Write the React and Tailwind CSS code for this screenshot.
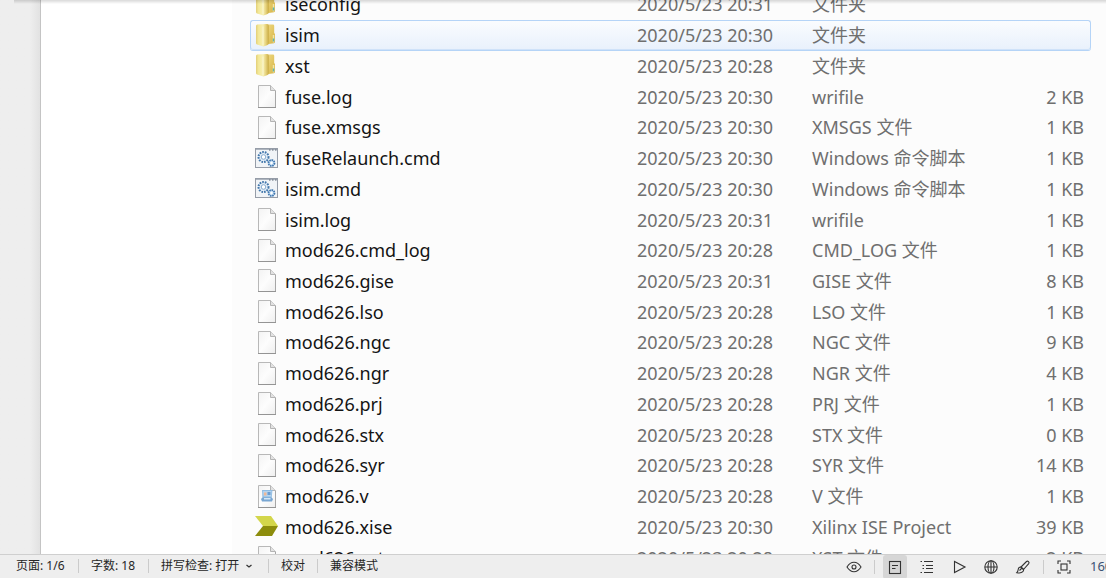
import React from "react";

const files = [
  { name: "iseconfig", date: "2020/5/23 20:31", type: "文件夹", icon: "folder" },
  { name: "isim", date: "2020/5/23 20:30", type: "文件夹", icon: "folder", selected: true },
  { name: "xst", date: "2020/5/23 20:28", type: "文件夹", icon: "folder" },
  { name: "fuse.log", date: "2020/5/23 20:30", type: "wrifile", size: "2 KB" },
  { name: "fuse.xmsgs", date: "2020/5/23 20:30", type: "XMSGS 文件", size: "1 KB" },
  { name: "fuseRelaunch.cmd", date: "2020/5/23 20:30", type: "Windows 命令脚本", size: "1 KB", icon: "cmd" },
  { name: "isim.cmd", date: "2020/5/23 20:30", type: "Windows 命令脚本", size: "1 KB", icon: "cmd" },
  { name: "isim.log", date: "2020/5/23 20:31", type: "wrifile", size: "1 KB" },
  { name: "mod626.cmd_log", date: "2020/5/23 20:28", type: "CMD_LOG 文件", size: "1 KB" },
  { name: "mod626.gise", date: "2020/5/23 20:31", type: "GISE 文件", size: "8 KB" },
  { name: "mod626.lso", date: "2020/5/23 20:28", type: "LSO 文件", size: "1 KB" },
  { name: "mod626.ngc", date: "2020/5/23 20:28", type: "NGC 文件", size: "9 KB" },
  { name: "mod626.ngr", date: "2020/5/23 20:28", type: "NGR 文件", size: "4 KB" },
  { name: "mod626.prj", date: "2020/5/23 20:28", type: "PRJ 文件", size: "1 KB" },
  { name: "mod626.stx", date: "2020/5/23 20:28", type: "STX 文件", size: "0 KB" },
  { name: "mod626.syr", date: "2020/5/23 20:28", type: "SYR 文件", size: "14 KB" },
  { name: "mod626.v", date: "2020/5/23 20:28", type: "V 文件", size: "1 KB", icon: "verilog" },
  { name: "mod626.xise", date: "2020/5/23 20:30", type: "Xilinx ISE Project", size: "39 KB", icon: "xise" },
  { name: "mod626.xst", date: "2020/5/23 20:28", type: "XST 文件", size: "2 KB" },
];

const Gradients = () => (
  <svg className="absolute size-0" aria-hidden="true">
    <defs>
      <linearGradient id="folder-front" x1="0" y1="0" x2="1" y2="0">
        <stop offset="0" stopColor="#e3cf78" />
        <stop offset="0.2" stopColor="#f3e898" />
        <stop offset="0.55" stopColor="#f7f0b4" />
        <stop offset="0.75" stopColor="#e8d582" />
        <stop offset="1" stopColor="#c9ab42" />
      </linearGradient>
      <linearGradient id="folder-back" x1="0" y1="0" x2="1" y2="1">
        <stop offset="0" stopColor="#f1dd88" />
        <stop offset="1" stopColor="#d6b345" />
      </linearGradient>
      <linearGradient id="page-fill" x1="0" y1="0" x2="1" y2="1">
        <stop offset="0" stopColor="#f3f3f3" />
        <stop offset="0.5" stopColor="#fdfdfd" />
        <stop offset="1" stopColor="#eeeeee" />
      </linearGradient>
    </defs>
  </svg>
);

const FolderIcon = () => (
  <>
    <path d="M10 1.500h8q1.200 0 1.200 1.200V10l.8 1v8q0 1-1 1.200L10 21.500z" fill="url(#folder-back)" />
    <path
      d="M1 3Q1 1.800 2.200 1.600L12 1q1.800 0 1.800 1.700V20q0 1.800-1.800 2.300L8.500 23.500 2 21.500Q1 21 1 20z"
      fill="url(#folder-front)"
    />
    <path d="M8 3.500v19" stroke="#fdf9d8" strokeWidth="1" opacity="0.8" />
    <path d="M18.500 12v7.500" stroke="#f2e5a6" strokeWidth="1.500" />
    <path d="M18.500 15.500v3" stroke="#5fb3ad" strokeWidth="1.500" />
  </>
);

const PageShape = () => (
  <>
    <path d="M3.500 1.500h12l5 5v17h-17z" fill="url(#page-fill)" stroke="#b8b8b8" />
    <path d="M3 23.500h18" stroke="#949494" />
    <path d="M20.500 7v16" stroke="#a6a6a6" />
    <path d="M15.500 1.500v5h5" fill="#e2e2e2" stroke="#b4b4b4" />
  </>
);

const CmdIcon = () => (
  <>
    <rect x="0.500" y="2.500" width="22" height="19" fill="#f1f4f7" stroke="#969da8" />
    <path d="M1 3.500h21" stroke="#aeb5bf" />
    <path d="M14 4h1.500M17 4h1.500M20 4h1.500" stroke="#5d6674" />
    <circle cx="8.500" cy="11" r="5" fill="#e4eef8" stroke="#4478ac" strokeWidth="2" strokeDasharray="1.700 1" />
    <circle cx="8.500" cy="11" r="2.300" fill="#fff" stroke="#85a9cc" />
    <circle cx="16.500" cy="17" r="3" fill="#c9e0f5" stroke="#4178b0" strokeWidth="1.800" strokeDasharray="1.600 .7" />
    <circle cx="16.500" cy="17" r="1.200" fill="#fff" />
  </>
);

const VerilogIcon = () => (
  <>
    <PageShape />
    <path d="M7 6h10.500l-1 9H7.500z" fill="#8fbce3" />
    <path d="M8 7h8.500l-.5 5.500H8.500z" fill="#b5d3ed" />
    <path d="M9 8.500h2.500v3H9z" fill="#f0b896" />
    <path d="M12.500 8h3v3h-3z" fill="#6b9dd0" />
    <path d="M6 15l1.500-1.500h9L18 15l-1 2.500H7z" fill="#78a6d2" />
    <path d="M9 14h6.500v1.500H9z" fill="#d6e7f5" />
  </>
);

const XiseIcon = () => (
  <>
    <path d="M0 2h16l7 10H8z" fill="#d3d64b" />
    <path d="M8 12h15l-6 10H0z" fill="#8c8c0c" />
  </>
);

const icons = {
  folder: FolderIcon,
  cmd: CmdIcon,
  verilog: VerilogIcon,
  xise: XiseIcon,
  page: PageShape,
};

const FileIcon = ({ kind = "page" }) => {
  const Shape = icons[kind];
  return (
    <svg viewBox="0 0 24 25" className="h-[25px] w-6 shrink-0" fill="none" aria-hidden="true">
      <Shape />
    </svg>
  );
};

const FileRow = ({ file }) => {
  const cell = file.selected
    ? "border-y border-t-[#b5d4f7] border-b-[#cfe2f9] border-x-[#b5d4f7] bg-linear-to-b from-[#fafcfe] to-[#e9f1fc] px-1.5 shadow-[0_1px_0_#b5d4f7]"
    : "border-y border-transparent px-1.5";
  return (
    <tr className="text-[#6f6f6f]">
      <td className={`${cell} rounded-l-[3px] border-l pl-1 text-[#141414]`}>
        <div className="flex items-center gap-1.5">
          <FileIcon kind={file.icon} />
          <span>{file.name}</span>
        </div>
      </td>
      <td className={cell}>{file.date}</td>
      <td className={cell}>{file.type}</td>
      <td className={`${cell} rounded-r-[3px] border-r text-right`}>{file.size}</td>
    </tr>
  );
};

const Divider = () => <span className="h-3.5 w-px bg-[#cbcbcb]" />;

const ToolIcon = ({ children }) => (
  <svg
    viewBox="0 0 16 16"
    className="size-4"
    fill="none"
    stroke="#333"
    strokeWidth="1.1"
    aria-hidden="true"
  >
    {children}
  </svg>
);

const ToolButton = ({ label, active, children }) => (
  <button
    type="button"
    aria-label={label}
    className={`flex h-6 w-6 items-center justify-center rounded-[3px] ${active ? "bg-[#d6d6d6]" : ""}`}
  >
    <ToolIcon>{children}</ToolIcon>
  </button>
);

const StatusBar = () => (
  <footer className="flex h-6 shrink-0 items-center justify-between overflow-hidden border-t border-[#cfcfcf] bg-[#eee] text-xs whitespace-nowrap text-[#262626]">
    <div className="flex items-center gap-3 pb-0.5 pl-4">
      <button type="button" className="min-w-[50px] text-left">
        页面: 1/6
      </button>
      <Divider />
      <button type="button" className="min-w-[45px] text-left">
        字数: 18
      </button>
      <Divider />
      <button type="button" className="flex min-w-[95px] items-center gap-1.5">
        拼写检查: 打开
        <svg viewBox="0 0 8 8" className="size-2" fill="none" stroke="#333" strokeWidth="1.3" aria-hidden="true">
          <path d="M1.500 3l2.500 2 2.500-2" />
        </svg>
      </button>
      <Divider />
      <button type="button">校对</button>
      <Divider />
      <button type="button">兼容模式</button>
    </div>

    <div className="flex items-center">
      <ToolButton label="护眼模式">
        <path d="M1 8q3-4.700 7-4.700T15 8q-3 4.700-7 4.700T1 8z" />
        <circle cx="8" cy="8" r="2" />
      </ToolButton>
      <span className="mx-2 flex">
        <Divider />
      </span>
      <div className="flex gap-2">
        <ToolButton label="页面视图" active>
          <rect x="2.500" y="2.500" width="11" height="12" />
          <path d="M5 6.500h6M5 9.500h3.500" />
        </ToolButton>
        <ToolButton label="大纲">
          <path d="M5 2.500h9M7 6.500h7M7 9.500h7M5 13.500h9" />
          <path d="M1.500 2.500h1.500M3.500 6.500h1.500M3.500 9.500h1.500M1.500 13.500h1.500" />
        </ToolButton>
        <ToolButton label="阅读版式">
          <path d="M3.500 2.500v11L14 8z" />
        </ToolButton>
        <ToolButton label="Web版式">
          <circle cx="8" cy="8" r="6.200" />
          <ellipse cx="8" cy="8" rx="3" ry="6.200" />
          <path d="M2 8h12M8 2v12" />
        </ToolButton>
        <ToolButton label="写作模式">
          <path d="M6 8l5.500-5.500q1-.8 2 .2t.2 2L8.500 10.500z" />
          <path d="M6 8q-2.500-.2-2.800 2.500Q3 12.500 1.800 13.700q4.400.8 6-1 1-1 .7-2.200zM4.500 11.500L7 9" />
        </ToolButton>
      </div>
      <span className="mx-2 flex">
        <Divider />
      </span>
      <ToolButton label="适合页面">
        <path d="M2 5V2h3M11 2h3v3M14 11v3h-3M5 14H2v-3" />
        <rect x="5" y="5" width="6" height="6" />
      </ToolButton>
      <button type="button" className="ml-3.5 w-4 overflow-hidden text-left text-[13px] text-[#3b5274]">
        160%
      </button>
    </div>
  </footer>
);

export default function App() {
  return (
    <div className="flex h-screen flex-col overflow-hidden bg-[#eee] font-['Noto_Sans','Noto_Sans_CJK_SC',sans-serif]">
      <Gradients />
      <main className="relative flex min-h-0 flex-1 overflow-hidden">
        <div className="w-10 shrink-0 bg-linear-to-r from-[#eee] from-75% to-[#e2e2e2]" />
        <div className="flex min-w-0 flex-1 border-l border-[#c4c4c4] bg-white pl-[191px]">
          <div className="min-w-0 flex-1 bg-[#fcfcfc] pr-[15px] pl-[18px]">
            <table className="-mt-[11px] h-[584px] w-full table-fixed border-separate border-spacing-0 text-lg leading-6 whitespace-nowrap">
              <colgroup>
                <col />
                <col className="w-[175px]" />
                <col className="w-[184px]" />
                <col className="w-[101px]" />
              </colgroup>
              <tbody>
                {files.map((file) => (
                  <FileRow key={file.name} file={file} />
                ))}
              </tbody>
            </table>
          </div>
        </div>
        <div className="pointer-events-none absolute top-0 right-0 left-3.5 h-1 bg-linear-to-b from-black/15 to-transparent" />
      </main>
      <StatusBar />
    </div>
  );
}
